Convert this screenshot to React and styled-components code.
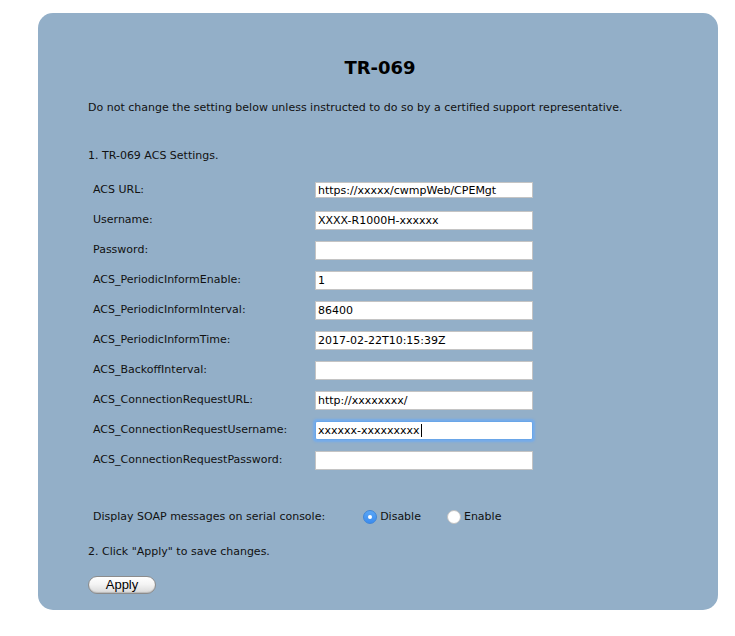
import React from "react";
import styled, { createGlobalStyle } from "styled-components";

const GlobalStyle = createGlobalStyle`
  html, body {
    margin: 0;
    padding: 0;
    background: #fff;
  }
  body {
    font-family: "DejaVu Sans", Verdana, sans-serif;
    font-size: 11px;
    color: #111;
  }
`;

const fields = [
  { label: "ACS URL:", value: "https://xxxxx/cwmpWeb/CPEMgt", short: true },
  { label: "Username:", value: "XXXX-R1000H-xxxxxx" },
  { label: "Password:", value: "" },
  { label: "ACS_PeriodicInformEnable:", value: "1" },
  { label: "ACS_PeriodicInformInterval:", value: "86400" },
  { label: "ACS_PeriodicInformTime:", value: "2017-02-22T10:15:39Z" },
  { label: "ACS_BackoffInterval:", value: "" },
  { label: "ACS_ConnectionRequestURL:", value: "http://xxxxxxxx/" },
  { label: "ACS_ConnectionRequestUsername:", value: "xxxxxx-xxxxxxxxx", focused: true },
  { label: "ACS_ConnectionRequestPassword:", value: "" },
];

function App() {
  return (
    <>
      <GlobalStyle />
      <Panel>
        <Title>TR-069</Title>
        <Warning>
          Do not change the setting below unless instructed to do so by a certified support representative.
        </Warning>
        <Step className="first">1. TR-069 ACS Settings.</Step>
        <FieldList>
          {fields.map((f) => (
            <FieldRow key={f.label}>
              <Label>{f.label}</Label>
              <TextBox $short={f.short} $focused={f.focused}>
                {f.value}
                {f.focused && <Caret />}
              </TextBox>
            </FieldRow>
          ))}
        </FieldList>
        <SoapRow>
          <Label>Display SOAP messages on serial console:</Label>
          <RadioGroup>
            <RadioOption>
              <Radio $checked />
              Disable
            </RadioOption>
            <RadioOption>
              <Radio />
              Enable
            </RadioOption>
          </RadioGroup>
        </SoapRow>
        <Step className="second">2. Click "Apply" to save changes.</Step>
        <ApplyButton>Apply</ApplyButton>
      </Panel>
    </>
  );
}

const Panel = styled.div`
  box-sizing: border-box;
  margin: 13px 0 0 38px;
  width: 680px;
  height: 597px;
  padding: 44px 50px 0 50px;
  background: #93afc8;
  border-radius: 15px;
`;

const Title = styled.h1`
  margin: 0;
  text-align: center;
  font-size: 18px;
  line-height: 22px;
  font-weight: bold;
  color: #000;
  padding-left: 4px;
`;

const Warning = styled.p`
  margin: 22px 0 0 0;
  line-height: 14px;
`;

const Step = styled.p`
  margin: 0;
  line-height: 14px;

  &.first {
    margin-top: 34px;
  }
  &.second {
    margin-top: 18px;
  }
`;

const FieldList = styled.div`
  margin-top: 12px;
  display: flex;
  flex-direction: column;
`;

const FieldRow = styled.div`
  display: grid;
  grid-template-columns: 222px 218px;
  align-items: center;
  height: 30px;
  padding-left: 5px;
`;

const Label = styled.span`
  line-height: 14px;
  white-space: nowrap;
`;

const TextBox = styled.div`
  box-sizing: border-box;
  height: ${(p) => (p.$short ? "16px" : "19px")};
  padding: 0 2px;
  background: #fff;
  border: 1px solid ${(p) => (p.$focused ? "#6aa6e8" : "#c4c4c4")};
  box-shadow: ${(p) => (p.$focused ? "0 0 2px 2px rgba(110, 170, 240, 0.85)" : "none")};
  border-radius: ${(p) => (p.$focused ? "2px" : "0")};
  display: flex;
  align-items: center;
  font-size: 11px;
  color: #000;
  white-space: nowrap;
  overflow: hidden;
`;

const Caret = styled.span`
  display: inline-block;
  width: 1px;
  height: 13px;
  background: #000;
  margin-left: 1px;
`;

const SoapRow = styled.div`
  margin-top: 32px;
  height: 20px;
  padding-left: 5px;
  display: flex;
  align-items: center;
`;

const RadioGroup = styled.div`
  margin-left: 38px;
  display: flex;
  align-items: center;
  gap: 26px;
`;

const RadioOption = styled.label`
  display: flex;
  align-items: center;
  gap: 3px;
  line-height: 14px;
`;

const Radio = styled.span`
  box-sizing: border-box;
  width: 14px;
  height: 14px;
  border-radius: 50%;
  position: relative;
  background: ${(p) => (p.$checked ? "linear-gradient(#5aa6f5, #3b8cf0)" : "#fff")};
  border: 1px solid ${(p) => (p.$checked ? "#3f86d8" : "#c2c2c2")};

  &::after {
    content: "";
    display: ${(p) => (p.$checked ? "block" : "none")};
    position: absolute;
    left: 50%;
    top: 50%;
    width: 4px;
    height: 4px;
    margin: -2px 0 0 -2px;
    border-radius: 50%;
    background: #fff;
  }
`;

const ApplyButton = styled.button`
  margin-top: 17px;
  width: 68px;
  height: 18px;
  padding: 0;
  border: 1px solid #8c8c8c;
  border-radius: 9px;
  background: linear-gradient(#ffffff 0%, #f4f4f4 45%, #d9d9d9 100%);
  box-shadow: inset 0 -1px 1px rgba(0, 0, 0, 0.15);
  font-family: "Liberation Sans", Arial, sans-serif;
  font-size: 13px;
  color: #000;
  line-height: 16px;
`;

export default App;
